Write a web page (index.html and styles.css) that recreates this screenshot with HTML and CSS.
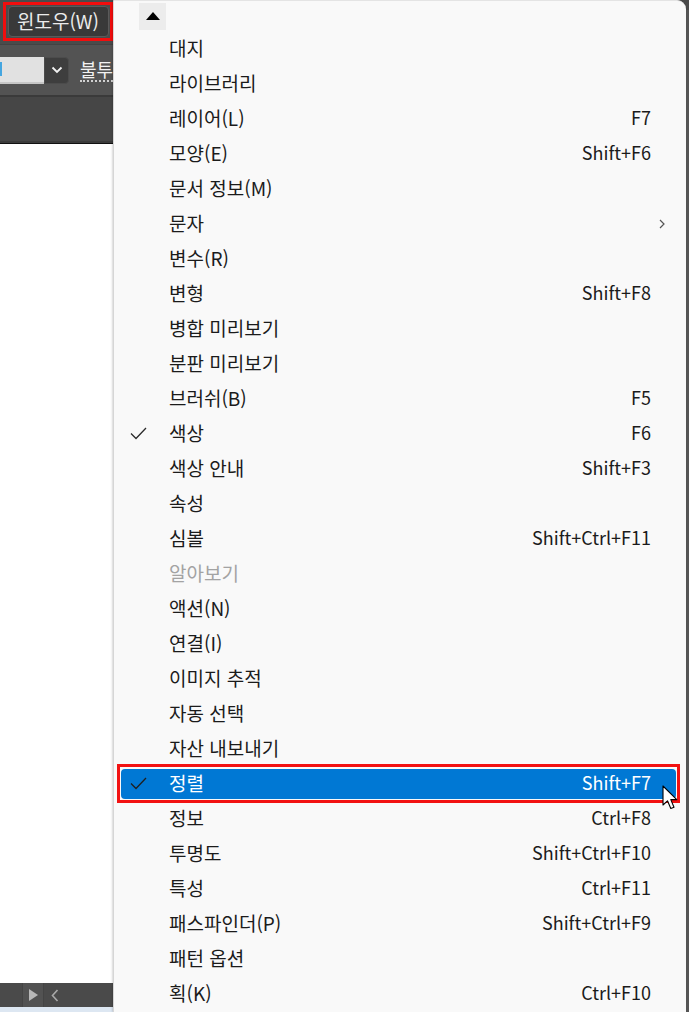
FILE: index.html
```html
<!doctype html>
<html lang="ko">
	<head>
		<title>윈도우 메뉴</title>
		<meta charset="utf-8" />
		<meta name="viewport" content="width=device-width, initial-scale=1" />
		<link rel="stylesheet" href="styles.css">
	</head>

	<body>
		<div id="screen">

			<!-- app behind the menu -->
			<div id="app">
				<div class="titlebar">
					<div class="redbox">
						<div class="menubtn">윈도우(W)</div>
					</div>
				</div>
				<div class="toolbar">
					<div class="field"><span class="cut"></span></div>
					<div class="drop">
						<svg width="12" height="8" viewBox="0 0 12 8"><path d="M1.5 1.5 L6 6 L10.5 1.5" fill="none" stroke="#f2f2f2" stroke-width="1.8"/></svg>
					</div>
					<span class="opacity">불투</span>
				</div>
				<div class="tabbar"></div>
				<div class="canvas"></div>
				<div class="statusbar">
					<div class="seg"></div>
					<div class="seg play">
						<svg width="9" height="12" viewBox="0 0 9 12"><path d="M0 0 L9 6 L0 12 Z" fill="#b8b8b8"/></svg>
					</div>
					<div class="seg prev">
						<svg width="8" height="13" viewBox="0 0 8 13"><path d="M6.5 1 L1.5 6.5 L6.5 12" fill="none" stroke="#a8a8a8" stroke-width="1.6"/></svg>
					</div>
				</div>
				<div class="footer"></div>
			</div>

			<!-- the dropdown menu -->
			<div id="menu">
				<div class="scrollup"><span class="tri"></span></div>
				<ul class="items">
					<li><div class="row"><span class="check"></span><span class="label">대지</span><span class="key"></span></div></li>
					<li><div class="row"><span class="check"></span><span class="label">라이브러리</span><span class="key"></span></div></li>
					<li><div class="row"><span class="check"></span><span class="label">레이어(L)</span><span class="key">F7</span></div></li>
					<li><div class="row"><span class="check"></span><span class="label">모양(E)</span><span class="key">Shift+F6</span></div></li>
					<li><div class="row"><span class="check"></span><span class="label">문서 정보(M)</span><span class="key"></span></div></li>
					<li><div class="row"><span class="check"></span><span class="label">문자</span><span class="key sub">
						<svg width="6" height="10" viewBox="0 0 6 10"><path d="M1 1 L5 5 L1 9" fill="none" stroke="#555" stroke-width="1.2"/></svg>
					</span></div></li>
					<li><div class="row"><span class="check"></span><span class="label">변수(R)</span><span class="key"></span></div></li>
					<li><div class="row"><span class="check"></span><span class="label">변형</span><span class="key">Shift+F8</span></div></li>
					<li><div class="row"><span class="check"></span><span class="label">병합 미리보기</span><span class="key"></span></div></li>
					<li><div class="row"><span class="check"></span><span class="label">분판 미리보기</span><span class="key"></span></div></li>
					<li><div class="row"><span class="check"></span><span class="label">브러쉬(B)</span><span class="key">F5</span></div></li>
					<li><div class="row"><span class="check"><svg width="17" height="13" viewBox="0 0 17 13"><path d="M1 6.5 L6 11.5 L16 1" fill="none" stroke="#2b2b2b" stroke-width="1.3"/></svg></span><span class="label">색상</span><span class="key">F6</span></div></li>
					<li><div class="row"><span class="check"></span><span class="label">색상 안내</span><span class="key">Shift+F3</span></div></li>
					<li><div class="row"><span class="check"></span><span class="label">속성</span><span class="key"></span></div></li>
					<li><div class="row"><span class="check"></span><span class="label">심볼</span><span class="key">Shift+Ctrl+F11</span></div></li>
					<li class="disabled"><div class="row"><span class="check"></span><span class="label">알아보기</span><span class="key"></span></div></li>
					<li><div class="row"><span class="check"></span><span class="label">액션(N)</span><span class="key"></span></div></li>
					<li><div class="row"><span class="check"></span><span class="label">연결(I)</span><span class="key"></span></div></li>
					<li><div class="row"><span class="check"></span><span class="label">이미지 추적</span><span class="key"></span></div></li>
					<li><div class="row"><span class="check"></span><span class="label">자동 선택</span><span class="key"></span></div></li>
					<li><div class="row"><span class="check"></span><span class="label">자산 내보내기</span><span class="key"></span></div></li>
					<li class="active"><div class="row"><span class="check"><svg width="17" height="13" viewBox="0 0 17 13"><path d="M1 6.5 L6 11.5 L16 1" fill="none" stroke="#1f1f1f" stroke-width="1.3"/></svg></span><span class="label">정렬</span><span class="key">Shift+F7</span></div></li>
					<li><div class="row"><span class="check"></span><span class="label">정보</span><span class="key">Ctrl+F8</span></div></li>
					<li><div class="row"><span class="check"></span><span class="label">투명도</span><span class="key">Shift+Ctrl+F10</span></div></li>
					<li><div class="row"><span class="check"></span><span class="label">특성</span><span class="key">Ctrl+F11</span></div></li>
					<li><div class="row"><span class="check"></span><span class="label">패스파인더(P)</span><span class="key">Shift+Ctrl+F9</span></div></li>
					<li><div class="row"><span class="check"></span><span class="label">패턴 옵션</span><span class="key"></span></div></li>
					<li><div class="row"><span class="check"></span><span class="label">획(K)</span><span class="key">Ctrl+F10</span></div></li>
				</ul>
			</div>

			<div id="edge"></div>

			<!-- mouse pointer over the active row -->
			<svg class="cursor" width="20" height="28" viewBox="0 0 20 28">
				<path d="M1 1 L1 20 L5.5 15.8 L8.8 23.5 L12 22.2 L8.8 14.6 L14.8 14.6 Z" fill="#ffffff" stroke="#000000" stroke-width="1.1" stroke-linejoin="round"/>
			</svg>
		</div>
	</body>
</html>
```

FILE: styles.css
```css
body {
	margin: 0;
	background-color: #4a4a4a;
	font-family: "Noto Sans CJK KR", "Noto Sans", sans-serif;
	overflow: hidden;
}

#screen {
	position: relative;
	display: flex;
	width: 689px;
	height: 1012px;
	overflow: hidden;
}

/* ---------- app behind ---------- */

#app {
	width: 113px;
	flex: none;
	display: flex;
	flex-direction: column;
	background-color: #ffffff;
}

.titlebar {
	height: 45px;
	background-color: #4b4b4b;
	padding: 2px 0 0 3px;
	box-sizing: border-box;
	border-bottom: 1px solid #434343;
}

.redbox {
	height: 39px;
	border: 3px solid #f20d0d;
	box-sizing: border-box;
	padding: 1px 1px 1px 2px;
}

.menubtn {
	height: 100%;
	background-color: #393939;
	border: 1px solid #5a5a5a;
	border-radius: 4px;
	box-sizing: border-box;
	color: #ececec;
	font-size: 19px;
	line-height: 28px;
	padding-left: 8px;
	white-space: nowrap;
	overflow: hidden;
}

.toolbar {
	height: 50px;
	background-color: #535353;
	display: flex;
	align-items: center;
	border-bottom: 2px solid #3a3a3a;
}

.field {
	width: 49px;
	height: 27px;
	background-color: #e1e1e1;
	border-bottom: 2px solid #c6c6c6;
	box-sizing: border-box;
	padding-top: 5px;
}

.cut {
	display: block;
	width: 2px;
	height: 14px;
	background-color: #45a6e0;
}

.drop {
	width: 27px;
	height: 27px;
	background-color: #3e3e3e;
	border: 1px solid #4c4c4c;
	border-radius: 0 4px 4px 0;
	box-sizing: border-box;
	display: flex;
	align-items: center;
	justify-content: center;
}

.opacity {
	margin-left: 11px;
	color: #f2f2f2;
	font-size: 18px;
	line-height: 22px;
	border-bottom: 2px dotted #d0d0d0;
	white-space: nowrap;
}

.tabbar {
	height: 46px;
	background-color: #464646;
	border-bottom: 2px solid #3b3b3b;
	box-sizing: border-box;
}

.canvas {
	flex: 1;
	background-color: #ffffff;
	border-top: 1px solid #111111;
}

.statusbar {
	height: 24px;
	background-color: #4a4a4a;
	display: flex;
}

.seg {
	width: 22px;
	border-right: 1px solid #444444;
}

.play {
	width: 20px;
	background-color: #525252;
	display: flex;
	align-items: center;
	justify-content: center;
}

.prev {
	width: 22px;
	border: none;
	display: flex;
	align-items: center;
	justify-content: center;
}

.footer {
	height: 5px;
	background-color: #dde7f2;
}

/* ---------- menu ---------- */

#menu {
	width: 573px;
	flex: none;
	background-color: #f9f9f9;
	border-left: 1px solid #d6d6d6;
	border-top: 1px solid #e4e4e4;
	border-radius: 0 9px 0 0;
	box-sizing: border-box;
	box-shadow: -1px 0 2px rgba(0, 0, 0, 0.15);
	position: relative;
	z-index: 1;
}

.scrollup {
	width: 27px;
	height: 27px;
	margin: 2px 0 0 25px;
	background-color: #ececec;
	display: flex;
	align-items: center;
	justify-content: center;
}

.tri {
	width: 0;
	height: 0;
	border-left: 7px solid transparent;
	border-right: 7px solid transparent;
	border-bottom: 8px solid #000000;
	margin-top: -2px;
}

.items {
	list-style: none;
	margin: 1px 0 0 0;
	padding: 0;
}

.items li {
	height: 35px;
	padding: 3px 10px 2px 7px;
	box-sizing: border-box;
}

.row {
	height: 30px;
	display: flex;
	align-items: center;
	padding: 0 25px 4px 9px;
	box-sizing: border-box;
	border-radius: 4px;
	color: #1b1b1b;
	font-size: 19px;
	white-space: nowrap;
	position: relative;
}

.check {
	width: 39px;
	height: 14px;
	flex: none;
	display: flex;
	align-items: center;
	margin-top: 3px;
}

.label {
	flex: 1;
}

.key {
	font-size: 18px;
}

.sub {
	display: flex;
	align-items: center;
	margin-right: -14px;
	margin-top: 3px;
}

.disabled .row {
	color: #a3a3a3;
}

.active .row {
	background-color: #0078d4;
	color: #ffffff;
}

.active .row::before {
	content: "";
	position: absolute;
	top: -5px;
	right: -4px;
	bottom: -4px;
	left: -4px;
	border: 3px solid #f21212;
}

#edge {
	flex: 1;
	background-color: #555555;
	margin-top: 10px;
}

.cursor {
	position: absolute;
	left: 662px;
	top: 785px;
	z-index: 2;
}
```
